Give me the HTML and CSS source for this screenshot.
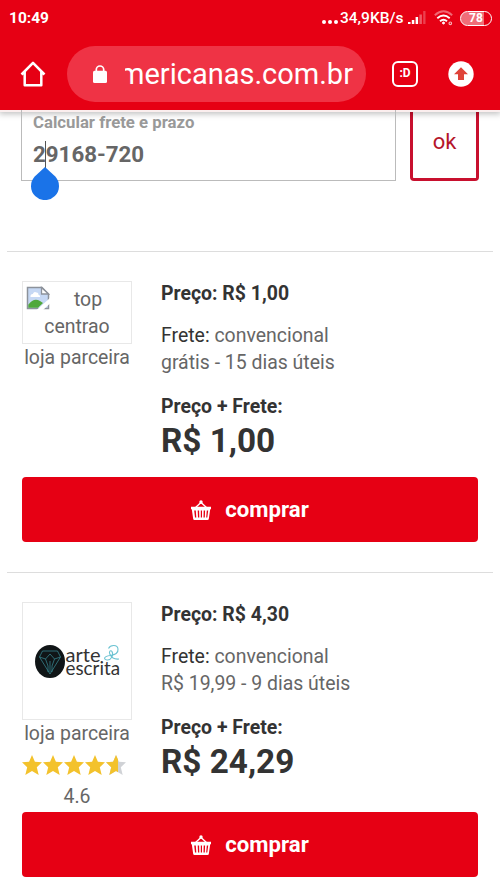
FILE: index.html
```html
<!DOCTYPE html>
<html lang="pt-BR">
<head>
<meta charset="utf-8">
<title>americanas.com.br</title>
<link rel="stylesheet" href="styles.css">
</head>
<body>
<svg class="defs" width="0" height="0">
  <symbol id="basket" viewBox="0 0 20 20">
    <path d="M4 8 9.200 3.200h1.600L16 8" fill="none" stroke="currentColor" stroke-width="1.300"/>
    <circle cx="10" cy="2" r="1.700" fill="currentColor"/>
    <path fill="currentColor" fill-rule="evenodd" d="M0 6.700h20v2.500h-.8L17.800 19q-.2 1-1.200 1H3.400q-1 0-1.200-1L.8 9.200H0zM3.200 10.500l.8 7h1.300l-.5-7zm3.500 0 .3 7h1.300l-.2-7zm3.100 0v7h1.200v-7zm2.900 0-.2 7h1.300l.3-7zm3.100 0-.6 7h1.100l.9-7z"/>
  </symbol>
  <symbol id="star" viewBox="0 0 20 20">
    <path fill="currentColor" d="m10 0 2.900 6.700 7.100.5-5.200 5L16.700 20 10 16 3.300 20l1.900-7.800L0 7.200l7.100-.5z"/>
  </symbol>
</svg>

<header class="browser">
  <div class="status">
    <span class="clock">10:49</span>
    <span class="dots"><i></i><i></i><i></i></span>
    <span class="speed">34,9KB/s</span>
    <svg class="signal" width="20" height="14" viewBox="0 0 20 14" fill="#fff">
      <rect x="1" y="11" width="2.500" height="2"/><rect x="4.800" y="9" width="2.500" height="4"/><rect x="8.600" y="6" width="2.500" height="7"/>
      <rect x="12.400" y="3.500" width="2.500" height="9.500" opacity=".35"/><rect x="16.200" y="0" width="2.300" height="13" opacity=".25"/>
    </svg>
    <svg class="wifi" width="20" height="16" viewBox="0 0 20 16" fill="none" stroke="#fff" stroke-width="1.900">
      <path d="M.8 5.200Q9.500-2.600 18.200 5.200" opacity=".4"/>
      <path d="M3.300 8.200q6.200-5.200 12.400 0M6 11.200q3.500-3 7 0"/>
      <circle cx="9.500" cy="13" r="1" fill="#fff" stroke-width="1"/>
      <circle cx="16.300" cy="13.300" r="1.300" stroke-width="1.100" opacity=".7"/>
    </svg>
    <span class="battery">78</span>
  </div>
  <div class="toolbar">
    <svg class="home" width="26" height="26" viewBox="0 0 26 26" fill="none" stroke="#fff" stroke-width="2.500" stroke-linejoin="round">
      <path d="M1.500 13.500 13 1.800l11.500 11.700M4.700 10.800v13.400h16.600V10.800"/>
    </svg>
    <div class="address">
      <svg width="14" height="18" viewBox="0 0 14 18"><path d="M3.300 7V4.500a3.700 3.500 0 0 1 7.400 0V7" fill="none" stroke="#fff" stroke-width="1.700"/><rect y="5.800" width="14" height="12.200" rx="1.500" fill="#fff"/></svg>
      <span class="url"><span>mericanas.com.br</span></span>
    </div>
    <span class="tabs">:D</span>
    <svg class="update" width="26" height="26" viewBox="0 0 26 26"><circle cx="13" cy="13" r="12.700" fill="#fff"/><path d="m13 6.300 7 7h-4V19h-6v-5.700H6z" fill="#df4339"/></svg>
  </div>
</header>

<main>
  <form class="freight">
    <div class="field">
      <span class="label">Calcular frete e prazo</span>
      <span class="zip">29168-720</span>
      <span class="caret"></span>
      <svg class="handle" width="28" height="33" viewBox="0 0 28 33"><path d="M14 0 24 9.300a14 14 0 1 1-20 0z" fill="#1a73e8"/></svg>
    </div>
    <div class="ok">ok</div>
  </form>

  <section class="offer">
    <div class="details">
      <div class="seller">
        <div class="logo missing">
          <svg width="24" height="24" viewBox="0 0 24 24">
            <path d="M1.500 1.500H16l6.500 6.500v14.500h-21z" fill="#c6d8f4" stroke="#8d929b" stroke-width="1.500"/>
            <path d="M4.500 11q-.3-3 2.300-3Q8 5 10.500 6.500q2-.2 2 2.200 2 .3 1.500 2.300z" fill="#fff"/>
            <path d="M2.300 21.700v-3Q8 11 14 15l3 2-5 4.700z" fill="#50a83b"/>
            <path d="M15.500 1.500V8h7z" fill="#fff" stroke="#8d929b" stroke-width="1.300"/>
            <path d="M10 24.500 24 12v5.500l-7.500 7z" fill="#fff"/>
          </svg><span class="word">top</span><br>centrao
        </div>
        <span class="partner">loja parceira</span>
      </div>
      <div class="prices">
        <p class="price">Preço: R$ 1,00</p>
        <p class="ship"><b>Frete:</b> convencional<br>grátis - 15 dias úteis</p>
        <p class="sum">Preço + Frete:</p>
        <p class="total">R$ 1,00</p>
      </div>
    </div>
    <div class="buy"><svg width="20" height="20"><use href="#basket"/></svg>comprar</div>
  </section>

  <section class="offer rated">
    <div class="details">
      <div class="seller">
        <div class="logo brand">
          <svg width="86" height="36" viewBox="0 0 86 36">
            <ellipse cx="15" cy="17.500" rx="15" ry="16.500" fill="#101517"/>
            <g fill="none" stroke="#3b8f9b" stroke-width=".7"><path d="m4.500 13 3-6h15l3 6L15 30zM4.500 13l6 2 4.500-5 4.500 5 6-2M10.500 15 13 22v6m6.500-13L17 22v6M15 17v11"/></g>
            <path d="M73.500 4.500c2-4 9-4 9.500.5s-4 6-8 6.500c-6 .8-7 4-3 4.500s7-5 5-8.500c-1.500-2-3.500 0-2 3s5 5 9 4.500" fill="none" stroke="#6cc3d2" stroke-width="1.100"/>
            <text x="30.500" y="18" textLength="35" lengthAdjust="spacingAndGlyphs">arte</text>
            <text x="30.500" y="31" textLength="54.500" lengthAdjust="spacingAndGlyphs">escrita</text>
          </svg>
        </div>
        <span class="partner">loja parceira</span>
        <div class="stars">
          <svg width="20" height="20"><use href="#star"/></svg><svg width="20" height="20"><use href="#star"/></svg><svg width="20" height="20"><use href="#star"/></svg><svg width="20" height="20"><use href="#star"/></svg><svg width="20" height="20" class="part"><use href="#star" class="empty"/><use href="#star" class="fill"/></svg>
        </div>
        <span class="score">4.6</span>
      </div>
      <div class="prices">
        <p class="price">Preço: R$ 4,30</p>
        <p class="ship"><b>Frete:</b> convencional<br>R$ 19,99 - 9 dias úteis</p>
        <p class="sum">Preço + Frete:</p>
        <p class="total">R$ 24,29</p>
      </div>
    </div>
    <div class="buy"><svg width="20" height="20"><use href="#basket"/></svg>comprar</div>
  </section>
</main>
</body>
</html>
```
FILE: styles.css
```css
* { box-sizing: border-box; }
body {
  margin: 0;
  height: 889px;
  overflow: hidden;
  background: #fff;
  color: #666;
  font: 19.450px/27px Roboto, sans-serif;
}
p { margin: 0; }
svg { display: block; flex: none; }
.defs { position: absolute; }

.browser {
  position: relative;
  height: 110px;
  background: #e60014;
  color: #fff;
  box-shadow: 0 2px 0 #fbeeee, 0 3px 6px 1px rgba(0, 0, 0, .25);
}
.status {
  display: flex;
  align-items: center;
  height: 36px;
  padding: 0 8px 0 9px;
  font-size: 15.500px;
  font-weight: 500;
}
.clock { margin-right: auto; font-weight: 700; }
.dots { display: flex; gap: 2px; margin: 7px 2px 0 0; }
.dots i { width: 4px; height: 4px; border-radius: 50%; background: #fff; }
.speed { width: 65px; white-space: nowrap; }
.signal { margin-left: 2px; }
.wifi { margin-left: 7px; }
.battery {
  width: 32px;
  height: 15px;
  margin-left: 6px;
  border: 1.500px solid #fff;
  border-radius: 8px;
  background: linear-gradient(90deg, #f06d78 78%, #e60014 78%);
  font-size: 12px;
  font-weight: 700;
  line-height: 13px;
  text-align: center;
}
.toolbar {
  display: flex;
  align-items: center;
  height: 75px;
  padding: 0 26px 0 20px;
}
.address {
  display: flex;
  align-items: center;
  width: 300px;
  height: 56px;
  margin: 0 26px 0 21px;
  padding-left: 26px;
  border-radius: 28px;
  background: #ef3345;
}
.url {
  display: flex;
  justify-content: flex-end;
  width: 228px;
  margin-left: 18px;
  overflow: hidden;
  font-size: 29px;
  line-height: 42px;
}
.tabs {
  width: 26px;
  height: 26px;
  margin-right: 30px;
  border: 2.500px solid #fff;
  border-radius: 6px;
  font-size: 12px;
  font-weight: 700;
  line-height: 21px;
  text-align: center;
}

.freight {
  display: flex;
  gap: 14px;
  height: 141px;
  padding: 0 21px;
}
.field {
  position: relative;
  width: 375px;
  height: 71px;
  padding: 0 11px;
  border: solid #bbb;
  border-width: 0 1.500px 1.500px;
}
.label, .zip { display: block; font-weight: 700; }
.label { font-size: 16.750px; line-height: 24px; color: #999; }
.zip { margin-top: 7px; font-size: 22.300px; }
.caret {
  position: absolute;
  left: 23px;
  top: 31px;
  width: 1px;
  height: 29px;
  background: #555;
}
.handle { position: absolute; left: 9px; top: 57px; }
.ok {
  width: 69px;
  height: 71px;
  border: 3px solid #c8102e;
  border-top: 0;
  border-radius: 0 0 4px 4px;
  color: #b5152b;
  font-size: 22px;
  line-height: 63px;
  text-align: center;
}

.offer {
  height: 321px;
  margin: 0 7px;
  padding: 29px 15px 0;
  border-top: 1px solid #ddd;
}
.details {
  display: flex;
  gap: 29px;
  height: 196px;
}
.rated .details { height: 210px; }
.seller { width: 110px; text-align: center; }
.logo { position: relative; border: 1px solid #e8e8e8; }
.missing { height: 63px; padding-top: 4px; }
.missing svg { float: left; margin-left: 3px; }
.word { margin-right: 5px; }
.partner { display: block; white-space: nowrap; }
.brand { height: 118px; padding: 41px 0 0 12px; }
.brand text { font: 400 20px Lato, sans-serif; fill: #333; }
.stars { display: flex; gap: 1px; margin-top: 8px; color: #f3c22c; }
.part .fill { clip-path: inset(0 40% 0 0); }
.part .empty { color: #d0d2d6; }
.score { display: block; margin-top: 8px; }
.price { color: #333; font-weight: 700; line-height: 26px; }
.ship { margin-top: 15px; }
.ship b { color: #333; font-weight: 400; }
.sum { margin-top: 18px; color: #333; font-weight: 700; line-height: 26px; }
.total { color: #333; font-size: 33.300px; font-weight: 700; line-height: 41px; }
.buy {
  display: flex;
  align-items: center;
  justify-content: center;
  gap: 14px;
  height: 65px;
  border-radius: 4px;
  background: #e60014;
  color: #fff;
  font-size: 22.200px;
  font-weight: 700;
}
```
